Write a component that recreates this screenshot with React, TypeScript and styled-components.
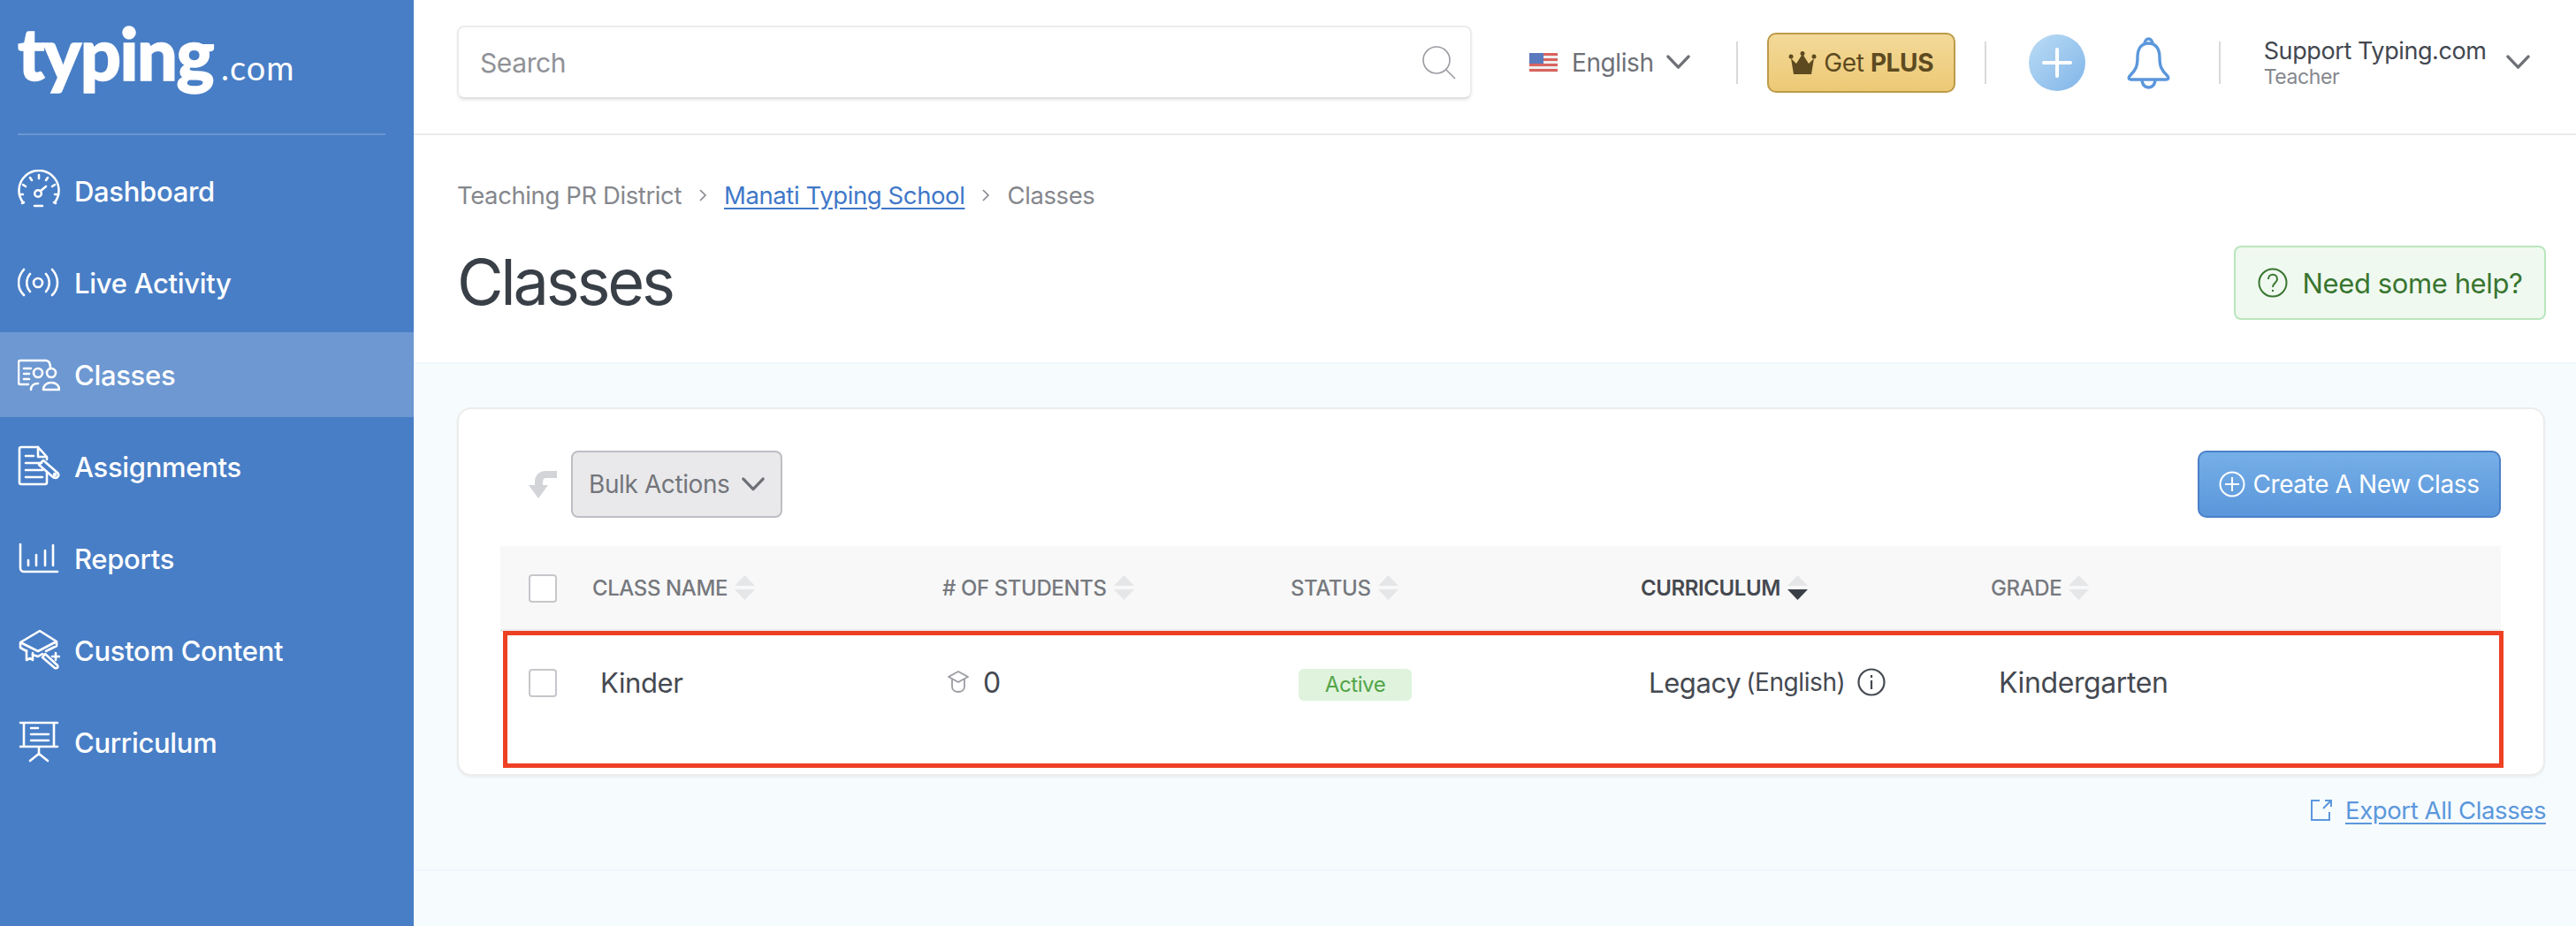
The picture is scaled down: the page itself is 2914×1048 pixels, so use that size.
import React from "react";
import styled, { createGlobalStyle } from "styled-components";

const GlobalStyle = createGlobalStyle`
  html, body {
    margin: 0;
    padding: 0;
    background: #fff;
  }
  * {
    box-sizing: border-box;
  }
  body {
    font-family: "Inter", "Liberation Sans", sans-serif;
    letter-spacing: -0.025em;
    color: #393f47;
  }
`;

const Page = styled.div`
  display: flex;
  width: 2914px;
  height: 1048px;
  overflow: hidden;
`;

const Sidebar = styled.aside`
  width: 468px;
  flex: none;
  background: #487ec6;
  color: #fff;
`;

const Logo = styled.div`
  height: 153px;
  margin: 0 32px 0 20px;
  border-bottom: 2px solid #6a96d0;
  display: flex;
  align-items: baseline;
  padding-top: 22px;
`;

const LogoWord = styled.span`
  font-family: "Lato", sans-serif;
  font-size: 81px;
  line-height: 76px;
  font-weight: 900;
  letter-spacing: -1.5px;
  -webkit-text-stroke: 1.5px #fff;
`;

const LogoTld = styled.span`
  font-family: "Lato", sans-serif;
  font-size: 38px;
  font-weight: 400;
  margin-left: 9px;
  letter-spacing: 1px;
`;

const Nav = styled.nav`
  display: flex;
  flex-direction: column;
  gap: 8px;
  padding-top: 15px;
`;

const NavItem = styled.a<{ $active?: boolean }>`
  height: 96px;
  display: flex;
  align-items: center;
  gap: 16px;
  padding-left: 20px;
  font-size: 31px;
  font-weight: 500;
  letter-spacing: -0.01em;
  background: ${(p) => (p.$active ? "#6d98d2" : "transparent")};
  svg {
    width: 48px;
    height: 48px;
    flex: none;
    fill: none;
    stroke: #fff;
    stroke-width: 2.6;
    stroke-linecap: round;
    stroke-linejoin: round;
  }
`;

const Main = styled.main`
  flex: 1;
  min-width: 0;
  display: flex;
  flex-direction: column;
`;

const TopBar = styled.header`
  height: 153px;
  flex: none;
  border-bottom: 2px solid #ebebeb;
  display: flex;
  align-items: center;
  padding: 0 0 10px 49px;
`;

const SearchBox = styled.div`
  width: 1148px;
  height: 83px;
  flex: none;
  border: 2px solid #ececec;
  border-bottom-color: #e2e2e2;
  border-radius: 8px;
  box-shadow: 0 2px 3px rgba(0, 0, 0, 0.07);
  display: flex;
  align-items: center;
  justify-content: space-between;
  padding: 0 14px 0 24px;
  font-size: 30px;
  color: #8f9197;
`;

const LangPicker = styled.div`
  margin-left: 65px;
  display: flex;
  align-items: center;
  font-size: 28px;
  color: #6e7077;
`;

const LangLabel = styled.span`
  margin: 0 14px 0 16px;
`;

const VRule = styled.span<{ $ml: number }>`
  width: 2px;
  height: 48px;
  flex: none;
  background: #d9d9d9;
  margin-left: ${(p) => p.$ml}px;
`;

const PlusButton = styled.div`
  width: 213px;
  height: 68px;
  flex: none;
  margin-left: 33px;
  border: 2px solid #bc9a48;
  border-radius: 10px;
  background: linear-gradient(#f3d999, #ecc975);
  display: flex;
  align-items: center;
  justify-content: center;
  gap: 8px;
  font-size: 28px;
  color: #5d4a20;
  b {
    font-weight: 700;
  }
`;

const AddCircle = styled.div`
  width: 64px;
  height: 64px;
  flex: none;
  margin-left: 48px;
  border-radius: 50%;
  background: linear-gradient(135deg, #bcdcf5, #80b5e8);
  display: flex;
  align-items: center;
  justify-content: center;
`;

const BellWrap = styled.div`
  margin-left: 47px;
  display: flex;
`;

const Account = styled.div`
  margin-left: 49px;
  display: flex;
  flex-direction: column;
  width: 274px;
  flex: none;
`;

const AccountName = styled.span`
  font-size: 27px;
  line-height: 32px;
  color: #43474f;
  white-space: nowrap;
`;

const AccountRole = styled.span`
  font-size: 23px;
  line-height: 26px;
  color: #85878d;
`;

const TitleSection = styled.section`
  height: 257px;
  flex: none;
  padding: 51px 34px 0 49px;
`;

const Breadcrumbs = styled.div`
  display: flex;
  align-items: center;
  height: 34px;
  font-size: 27.5px;
  color: #85878d;
`;

const CrumbLink = styled.a`
  color: #3f78c8;
  text-decoration: underline;
  text-underline-offset: 4px;
`;

const CrumbSep = styled.span`
  display: flex;
  margin: 0 19px;
`;

const TitleRow = styled.div`
  display: flex;
  justify-content: space-between;
  align-items: center;
  margin-top: 40px;
`;

const Title = styled.h1`
  margin: 0 0 3px;
  font-size: 72px;
  line-height: 81px;
  font-weight: 400;
  letter-spacing: -0.045em;
  color: #393f47;
`;

const HelpButton = styled.a`
  width: 353px;
  height: 84px;
  display: flex;
  align-items: center;
  justify-content: center;
  gap: 17px;
  background: #eff9f0;
  border: 2px solid #b9e6bc;
  border-radius: 8px;
  color: #38752f;
  font-size: 31px;
`;

const Content = styled.section`
  flex: 1;
  background: #f6fbfe;
  border-top: 2px solid #f0f7fc;
  padding: 49px 34px 0 49px;
`;

const Card = styled.div`
  position: relative;
  width: 2362px;
  height: 417px;
  background: #fff;
  border: 2px solid #ececec;
  border-radius: 16px;
  box-shadow: 0 2px 3px rgba(0, 0, 0, 0.05);
  padding: 47px 48px 0 47px;
`;

const Toolbar = styled.div`
  display: flex;
  align-items: center;
  justify-content: space-between;
  height: 76px;
`;

const BulkGroup = styled.div`
  display: flex;
  align-items: center;
  gap: 16px;
  padding-left: 32px;
`;

const BulkButton = styled.div`
  width: 239px;
  height: 76px;
  border: 2px solid #bdbec3;
  border-radius: 8px;
  background: #e9e9eb;
  display: flex;
  align-items: center;
  justify-content: space-between;
  padding: 0 18px;
  font-size: 28px;
  color: #73757b;
`;

const CreateButton = styled.div`
  width: 343px;
  height: 76px;
  border: 2px solid #4b80c8;
  border-radius: 10px;
  background: linear-gradient(#76afe8, #5a96da);
  display: flex;
  align-items: center;
  justify-content: center;
  gap: 8px;
  color: #fff;
  font-size: 28px;
`;

const columns = "104px 396px 394px 396px 396px 1fr";

const TableHead = styled.div`
  margin-top: 32px;
  height: 97px;
  background: #f8f8f8;
  border-bottom: 3px solid #ebebeb;
  display: grid;
  grid-template-columns: ${columns};
  align-items: center;
`;

const TableRow = styled.div`
  height: 114px;
  display: grid;
  grid-template-columns: ${columns};
  align-items: center;
  color: #454951;
`;

const CheckCell = styled.div`
  display: flex;
  padding: 2px 0 0 32px;
`;

const CheckBox = styled.span`
  width: 32px;
  height: 32px;
  background: #fff;
  border: 2px solid #c6c7cb;
  border-radius: 4px;
`;

const HeadCell = styled.div<{ $sorted?: boolean }>`
  display: flex;
  align-items: center;
  gap: 8px;
  font-size: 24px;
  font-weight: ${(p) => (p.$sorted ? 600 : 500)};
  color: ${(p) => (p.$sorted ? "#45494f" : "#76787e")};
`;

const Cell = styled.div<{ $inset: number; $size?: number }>`
  display: flex;
  align-items: center;
  padding-left: ${(p) => p.$inset}px;
  font-size: ${(p) => p.$size ?? 31}px;
`;

const CountIcon = styled.span`
  display: flex;
  margin-right: 16px;
`;

const Badge = styled.span`
  width: 128px;
  height: 36px;
  margin-top: 5px;
  display: flex;
  align-items: center;
  justify-content: center;
  background: #dff3dd;
  border-radius: 6px;
  color: #53a548;
  font-size: 24px;
`;

const Note = styled.span`
  font-size: 28px;
  margin-left: 6px;
  margin-right: 14px;
`;

const Highlight = styled.div`
  position: absolute;
  left: 50px;
  top: 251px;
  width: 2263px;
  height: 155px;
  border: 5px solid #ee4023;
  pointer-events: none;
`;

const ExportRow = styled.div`
  display: flex;
  justify-content: flex-end;
  align-items: center;
  gap: 14px;
  margin-top: 22px;
  font-size: 27.5px;
  color: #5b97dc;
`;

const ExportLink = styled.a`
  text-decoration: underline;
  text-underline-offset: 4px;
`;

const FooterRule = styled.div`
  height: 2px;
  margin: 50px -34px 0 -49px;
  background: #f0f7fc;
`;

const Chevron = ({ w = 27, color = "#6e7077" }: { w?: number; color?: string }) => (
  <svg width={w} height={w * 0.6} viewBox="0 0 27 16" fill="none" stroke={color} strokeWidth="3.4" strokeLinecap="round" strokeLinejoin="round">
    <path d="M2 2l11.5 12L25 2" />
  </svg>
);

const CrumbChevron = () => (
  <svg width="10" height="16" viewBox="0 0 10 16" fill="none" stroke="#85878d" strokeWidth="1.6">
    <path d="M2 2l6 6-6 6" />
  </svg>
);

const SortCaret = ({ active }: { active?: boolean }) => (
  <svg width="23" height="28" viewBox="0 0 23 28">
    <path d="M11.5 0L23 12H0z" fill="#e5e6e8" />
    <path d="M0 16h23L11.5 28z" fill={active ? "#3a3f47" : "#e5e6e8"} />
  </svg>
);

const GaugeIcon = () => (
  <svg viewBox="0 0 48 48">
    <path d="M5 38l2-1M43 38l-2-1" />
    <path d="M6 37A22.500 22.500 0 1 1 42 37" />
    <path d="M24 6v4M14 9l2 3M34 9l-2 3M6 17l3 2M42 17l-3 2M2 28h4M46 28h-4" />
    <circle cx="23" cy="27" r="3.800" />
    <path d="M26 24l6-5M19 41h9" />
  </svg>
);

const LiveIcon = () => (
  <svg viewBox="0 0 48 48">
    <circle cx="23" cy="24" r="5" />
    <path d="M14 14C9 20 9 28 14 34M32 14C37 20 37 28 32 34M7 9C-1 18-1 30 7 38M39 9C47 18 47 30 39 38" />
  </svg>
);

const ClassesIcon = () => (
  <svg viewBox="0 0 48 48">
    <path d="M12 35H3a2 2 0 0 1-2-2V10a2 2 0 0 1 2-2h29c3 0 5 3 5 9" />
    <path d="M7 17h8M7 23h6M7 29h6" />
    <circle cx="23" cy="22" r="5" />
    <circle cx="38" cy="22" r="5" />
    <path d="M15 41c0-4 3-7 8-7M29 41c0-5 4-8 9-8s9 3 9 8z" />
  </svg>
);

const AssignmentsIcon = () => (
  <svg viewBox="0 0 48 48">
    <path d="M23 2H4a2 2 0 0 0-2 2v38a2 2 0 0 0 2 2h27a2 2 0 0 0 2-2V30" />
    <path d="M23 2v11h10L23 2zM33 13v3" />
    <path d="M9 12h9M9 20h18M9 28h19M9 36h19" />
    <path d="M29 17L45 31c2 2 1 4 0 5s-3 1-5 0L24 22z" />
    <circle cx="42" cy="33" r="1" />
  </svg>
);

const ReportsIcon = () => (
  <svg viewBox="0 0 48 48">
    <path d="M3 8v27a4 4 0 0 0 4 4h38" />
    <path d="M12 26v6M21 20v12M31 15v17M40 9v23" />
  </svg>
);

const CustomIcon = () => (
  <svg viewBox="0 0 48 48">
    <path d="M25 2L44 14 23 25 3 15zM3 15v6l7 4M44 14v5l-12 6M17 29l6 2 5-3" />
    <path d="M10 24v11l4-2 3 2v-8" />
    <path d="M31 28l14 13c1 2 0 4-3 3L28 32zM43 27v8M39 31h8" />
  </svg>
);

const CurriculumIcon = () => (
  <svg viewBox="0 0 48 48">
    <path d="M3 2h42M7 2v27M41 2v27M3 29h42M24 29v9M24 37l-10 8M24 37l10 8" />
    <path d="M15 8h8M15 15h20M15 22h20" />
  </svg>
);

const navItems = [
  { label: "Dashboard", icon: <GaugeIcon /> },
  { label: "Live Activity", icon: <LiveIcon /> },
  { label: "Classes", icon: <ClassesIcon />, active: true },
  { label: "Assignments", icon: <AssignmentsIcon /> },
  { label: "Reports", icon: <ReportsIcon /> },
  { label: "Custom Content", icon: <CustomIcon /> },
  { label: "Curriculum", icon: <CurriculumIcon /> },
];

const headers = [
  { label: "CLASS NAME" },
  { label: "# OF STUDENTS" },
  { label: "STATUS" },
  { label: "CURRICULUM", sorted: true },
  { label: "GRADE" },
];

export default function App() {
  return (
    <Page>
      <GlobalStyle />
      <Sidebar>
        <Logo>
          <LogoWord>typing</LogoWord>
          <LogoTld>.com</LogoTld>
        </Logo>
        <Nav>
          {navItems.map((item) => (
            <NavItem key={item.label} $active={item.active}>
              {item.icon}
              {item.label}
            </NavItem>
          ))}
        </Nav>
      </Sidebar>

      <Main>
        <TopBar>
          <SearchBox>
            Search
            <svg width="42" height="42" viewBox="0 0 42 42" fill="none" stroke="#9a9ca1" strokeWidth="1.6">
              <circle cx="18" cy="18" r="15" />
              <path d="M29 29l10 10" />
            </svg>
          </SearchBox>

          <LangPicker>
            <svg width="32" height="22" viewBox="0 0 32 22">
              <rect width="32" height="22" fill="#eee" />
              <path d="M0 0h32v3H0zM0 6h32v3H0zM0 12h32v3H0zM0 18h32v3H0z" fill="#d9635f" />
              <rect width="16" height="12" fill="#5b79bd" />
            </svg>
            <LangLabel>English</LangLabel>
            <Chevron />
          </LangPicker>
          <VRule $ml={52} />

          <PlusButton>
            <svg width="32" height="26" viewBox="0 0 32 26" fill="#5d4a20">
              <circle cx="16" cy="2.500" r="2.500" />
              <circle cx="3" cy="6" r="2.500" />
              <circle cx="29" cy="6" r="2.500" />
              <path d="M3 8l6 6 7-11 7 11 6-6-3 18H6z" />
            </svg>
            <span>
              Get <b>PLUS</b>
            </span>
          </PlusButton>
          <VRule $ml={33} />

          <AddCircle>
            <svg width="34" height="34" viewBox="0 0 34 34" fill="#fff">
              <rect x="15" y="0" width="4" height="34" rx="2" />
              <rect x="0" y="15" width="34" height="4" rx="2" />
            </svg>
          </AddCircle>

          <BellWrap>
            <svg width="49" height="60" viewBox="0 0 49 60" fill="none" stroke="#5b97dc" strokeWidth="3.4" strokeLinejoin="round">
              <path d="M20 9c0-8 9-8 9 0" />
              <path d="M24.5 8C15 8 12 16 12 24c0 10-2 14-8 20-3 3-2 5 1 5h39c3 0 4-2 1-5-6-6-8-10-8-20 0-8-3-16-12.500-16z" />
              <path d="M17 49c0 12 15 12 15 0" />
            </svg>
          </BellWrap>
          <VRule $ml={55} />

          <Account>
            <AccountName>Support Typing.com</AccountName>
            <AccountRole>Teacher</AccountRole>
          </Account>
          <Chevron />
        </TopBar>

        <TitleSection>
          <Breadcrumbs>
            Teaching PR District
            <CrumbSep>
              <CrumbChevron />
            </CrumbSep>
            <CrumbLink>Manati Typing School</CrumbLink>
            <CrumbSep>
              <CrumbChevron />
            </CrumbSep>
            Classes
          </Breadcrumbs>
          <TitleRow>
            <Title>Classes</Title>
            <HelpButton>
              <svg width="34" height="34" viewBox="0 0 34 34" fill="none" stroke="#38752f" strokeWidth="2">
                <circle cx="17" cy="17" r="15.500" />
                <path d="M12 13c0-7 10-7 10 0 0 4-5 4-5 9M17 25v2" />
              </svg>
              Need some help?
            </HelpButton>
          </TitleRow>
        </TitleSection>

        <Content>
          <Card>
            <Toolbar>
              <BulkGroup>
                <svg width="32" height="32" viewBox="0 0 32 32" fill="#d2d4d8">
                  <path d="M32 1v8H20c-3 0-4 2-4 5v3h6L11 32 0 17h7v-4C7 6 12 1 19 1z" />
                </svg>
                <BulkButton>
                  Bulk Actions
                  <Chevron w={26} />
                </BulkButton>
              </BulkGroup>
              <CreateButton>
                <svg width="30" height="30" viewBox="0 0 30 30" fill="none" stroke="#fff" strokeWidth="2">
                  <circle cx="15" cy="15" r="13.500" />
                  <path d="M15 7v16M7 15h16" />
                </svg>
                Create A New Class
              </CreateButton>
            </Toolbar>

            <TableHead>
              <CheckCell>
                <CheckBox />
              </CheckCell>
              {headers.map((h) => (
                <HeadCell key={h.label} $sorted={h.sorted}>
                  {h.label}
                  <SortCaret active={h.sorted} />
                </HeadCell>
              ))}
            </TableHead>

            <TableRow>
              <CheckCell>
                <CheckBox />
              </CheckCell>
              <Cell $inset={9}>Kinder</Cell>
              <Cell $inset={6} $size={32}>
                <CountIcon>
                  <svg width="24" height="26" viewBox="0 0 24 26" fill="none" stroke="#9a9ca1" strokeWidth="1.8" strokeLinejoin="round">
                    <path d="M12 1l11 6-11 6L1 7z" />
                    <path d="M5 10v8c0 8 14 8 14 0v-8" />
                  </svg>
                </CountIcon>
                0
              </Cell>
              <Cell $inset={9}>
                <Badge>Active</Badge>
              </Cell>
              <Cell $inset={9}>
                Legacy
                <Note>(English)</Note>
                <svg width="32" height="32" viewBox="0 0 32 32" fill="none" stroke="#454951" strokeWidth="2.2">
                  <circle cx="16" cy="16" r="14.500" />
                  <path d="M16 14v10M16 8v3" />
                </svg>
              </Cell>
              <Cell $inset={9} $size={32}>Kindergarten</Cell>
            </TableRow>

            <Highlight />
          </Card>

          <ExportRow>
            <svg width="26" height="26" viewBox="0 0 26 26" fill="none" stroke="#5b97dc" strokeWidth="2">
              <path d="M11 2H2v22h20V15M15 11L24 2M17 2h7v7" />
            </svg>
            <ExportLink>Export All Classes</ExportLink>
          </ExportRow>
          <FooterRule />
        </Content>
      </Main>
    </Page>
  );
}
